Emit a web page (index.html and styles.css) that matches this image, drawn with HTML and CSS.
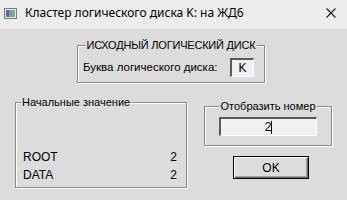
FILE: index.html
```html
<!DOCTYPE html>
<html lang="ru">
<head>
    <meta charset="UTF-8">
    <title>Кластер логического диска K: на ЖД6</title>
    <link rel="stylesheet" href="styles.css">
</head>
<body>
    <div class="window">
        <div class="titlebar">
            <svg class="app-icon" width="13" height="11" viewBox="0 0 13 11">
                <rect x="0.5" y="0.5" width="12" height="10" fill="#e8e8e8" stroke="#7a7a7a"/>
                <rect x="2" y="2" width="3" height="7" fill="#5b6f86"/>
                <rect x="5" y="2" width="3" height="7" fill="#6d9bb8"/>
                <rect x="8" y="2" width="3" height="7" fill="#7fb07a"/>
            </svg>
            <span class="title">Кластер логического диска K: на ЖД6</span>
            <svg class="close-btn" width="10" height="10" viewBox="0 0 10 10">
                <path d="M0.5 0.5 L9.5 9.5 M9.5 0.5 L0.5 9.5" stroke="#1a1a1a" stroke-width="1.1"/>
            </svg>
        </div>

        <div class="client">
            <div class="group source">
                <span class="group-title centered">ИСХОДНЫЙ ЛОГИЧЕСКИЙ ДИСК</span>
                <span class="field-label">Буква логического диска:</span>
                <span class="letter-box">K</span>
            </div>

            <div class="lower">
                <div class="group initial">
                    <span class="group-title">Начальные значение</span>
                    <div class="value-row"><span>ROOT</span><span>2</span></div>
                    <div class="value-row"><span>DATA</span><span>2</span></div>
                </div>

                <div class="side">
                    <div class="group show">
                        <span class="group-title centered">Отобразить номер</span>
                        <div class="number-box">2<span class="caret"></span></div>
                    </div>
                    <button class="ok-btn">OK</button>
                </div>
            </div>
        </div>
    </div>
</body>
</html>
```

FILE: styles.css
```css
body {
    margin: 0;
    background: #dcdcdc;
}

.window {
    width: 347px;
    height: 200px;
    display: flex;
    flex-direction: column;
    background: #dcdcdc;
    font-family: 'Liberation Sans', Arial, sans-serif;
    font-size: 12px;
    color: #000;
    overflow: hidden;
}

.titlebar {
    height: 29px;
    flex: none;
    display: flex;
    align-items: center;
    background: #ececec;
    padding: 0 11px 0 4px;
    box-sizing: border-box;
}

.app-icon {
    margin-top: -3px;
}

.title {
    font-family: 'Noto Sans', 'Open Sans', sans-serif;
    font-size: 12px;
    margin-left: 8px;
    margin-top: -4px;
    flex: 1;
}

.close-btn {
    margin-top: -4px;
}

.client {
    padding-top: 16px;
}

/* etched group frame */
.group {
    position: relative;
    box-sizing: border-box;
    border: 1px solid #8a8a8a;
    box-shadow: inset 1px 1px #fff, 1px 1px #fff;
}

.group-title {
    position: absolute;
    top: -8px;
    left: 5px;
    font-size: 11px;
    line-height: 14px;
    padding: 0 1px;
    background: #dcdcdc;
    white-space: nowrap;
}

.group-title.centered {
    left: 50%;
    transform: translateX(-50%);
}

.source .group-title {
    letter-spacing: -0.2px;
}

.source {
    margin-left: 77px;
    width: 188px;
    height: 38px;
    display: flex;
    align-items: center;
    padding: 6px 10px 0 5px;
}

.field-label {
    flex: 1;
    font-size: 11.5px;
}

.letter-box {
    width: 24px;
    height: 19px;
    box-sizing: border-box;
    display: flex;
    align-items: center;
    justify-content: center;
    background: #f0f0f0;
    border-top: 2px solid #5a5a5a;
    border-left: 2px solid #5a5a5a;
    border-right: 1px solid #fff;
    border-bottom: 1px solid #fff;
}

.lower {
    display: flex;
    margin-top: 19px;
}

.initial {
    margin-left: 15px;
    width: 172px;
    height: 86px;
    display: flex;
    flex-direction: column;
    justify-content: flex-end;
    padding: 0 9px 3px 7px;
}

.value-row {
    display: flex;
    justify-content: space-between;
    line-height: 18px;
}

.side {
    margin-left: 17px;
    width: 128px;
    padding-top: 4px;
    display: flex;
    flex-direction: column;
}

.show {
    height: 40px;
    padding: 10px 14px 0;
}

.number-box {
    height: 19px;
    box-sizing: border-box;
    display: flex;
    align-items: center;
    justify-content: center;
    background: #f0f0f0;
    border-top: 2px solid #5a5a5a;
    border-left: 2px solid #5a5a5a;
    border-right: 1px solid #fff;
    border-bottom: 1px solid #fff;
}

.caret {
    width: 1px;
    height: 13px;
    background: #000;
}

.ok-btn {
    margin: 10px 0 0 29px;
    width: 76px;
    height: 23px;
    padding: 0;
    font-family: inherit;
    font-size: 12px;
    background: #dcdcdc;
    border: 1px solid #000;
    box-shadow: inset 1px 1px #fff, inset -1px -1px #6a6a6a, inset -2px -2px #a0a0a0;
    color: #000;
}
```
